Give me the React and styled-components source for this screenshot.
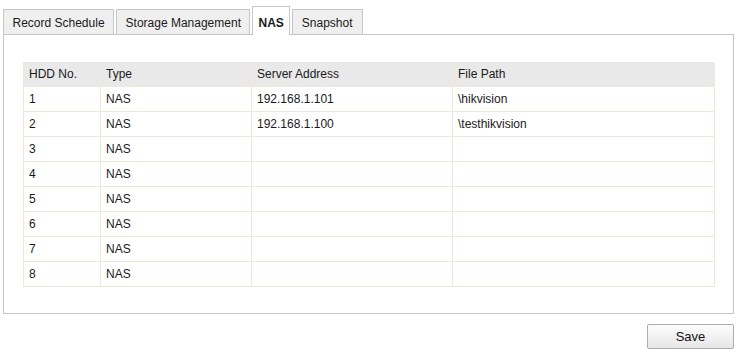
import React from "react";
import styled, { createGlobalStyle } from "styled-components";

const Global = createGlobalStyle`
  html, body { margin: 0; padding: 0; background: #fff; }
  body { font-family: "Liberation Sans", Arial, sans-serif; font-size: 12px; color: #1a1a1a; }
`;

const Page = styled.div`
  width: 731px;
  padding: 6px 0 0 3px;
  display: flex;
  flex-direction: column;
`;

const TabBar = styled.div`
  display: flex;
  align-items: flex-end;
  gap: 2px;
  height: 28px;
  position: relative;
  z-index: 1;
`;

const Tab = styled.div`
  box-sizing: border-box;
  height: ${(p) => (p.$active ? "29px" : "25px")};
  margin-bottom: ${(p) => (p.$active ? "-1px" : "0")};
  padding: 0 ${(p) => p.$pad}px;
  padding-top: ${(p) => (p.$active ? "3px" : "1px")};
  border: 1px solid #c6c6c6;
  border-bottom: 0;
  background: ${(p) => (p.$active ? "#fff" : "#efefef")};
  font-weight: ${(p) => (p.$active ? "bold" : "normal")};
  display: flex;
  align-items: center;
  white-space: nowrap;
  cursor: default;
`;

const Panel = styled.div`
  box-sizing: border-box;
  width: 731px;
  height: 280px;
  border: 1px solid #c6c6c6;
  padding: 27px 19px 0 19px;
`;

const Table = styled.table`
  border-collapse: collapse;
  table-layout: fixed;
  width: 691px;
`;

const HeadRow = styled.tr`
  height: 24px;
  background: #e9e9e9;
`;

const Row = styled.tr`
  height: 25px;
`;

const Cell = styled.td`
  border: 1px solid #ece8da;
  padding: 0 5px;
  text-align: left;
  font-weight: normal;
  white-space: nowrap;
  overflow: hidden;
`;

const HeadCell = styled(Cell).attrs({ as: "th" })`
  border-top: none;
`;

const Footer = styled.div`
  display: flex;
  justify-content: flex-end;
  padding-top: 10px;
`;

const Button = styled.button`
  box-sizing: border-box;
  width: 87px;
  height: 25px;
  border: 1px solid #acacac;
  border-radius: 2px;
  background: linear-gradient(#fdfdfd, #e6e6e6);
  font-family: "Liberation Sans", Arial, sans-serif;
  font-size: 13px;
  color: #111;
  padding: 0;
`;

const tabs = [
  { label: "Record Schedule", pad: 8.5 },
  { label: "Storage Management", pad: 8.5 },
  { label: "NAS", pad: 5, active: true },
  { label: "Snapshot", pad: 9 },
];

const rows = [
  ["1", "NAS", "192.168.1.101", "\\hikvision"],
  ["2", "NAS", "192.168.1.100", "\\testhikvision"],
  ["3", "NAS", "", ""],
  ["4", "NAS", "", ""],
  ["5", "NAS", "", ""],
  ["6", "NAS", "", ""],
  ["7", "NAS", "", ""],
  ["8", "NAS", "", ""],
];

export default function App() {
  return (
    <>
      <Global />
      <Page>
        <TabBar>
          {tabs.map((t) => (
            <Tab key={t.label} $active={t.active} $pad={t.pad}>
              {t.label}
            </Tab>
          ))}
        </TabBar>
        <Panel>
          <Table>
            <colgroup>
              <col style={{ width: 77 }} />
              <col style={{ width: 151 }} />
              <col style={{ width: 201 }} />
              <col style={{ width: 262 }} />
            </colgroup>
            <thead>
              <HeadRow>
                <HeadCell>HDD No.</HeadCell>
                <HeadCell>Type</HeadCell>
                <HeadCell>Server Address</HeadCell>
                <HeadCell>File Path</HeadCell>
              </HeadRow>
            </thead>
            <tbody>
              {rows.map((r) => (
                <Row key={r[0]}>
                  {r.map((c, i) => (
                    <Cell key={i}>{c}</Cell>
                  ))}
                </Row>
              ))}
            </tbody>
          </Table>
        </Panel>
        <Footer>
          <Button>Save</Button>
        </Footer>
      </Page>
    </>
  );
}
